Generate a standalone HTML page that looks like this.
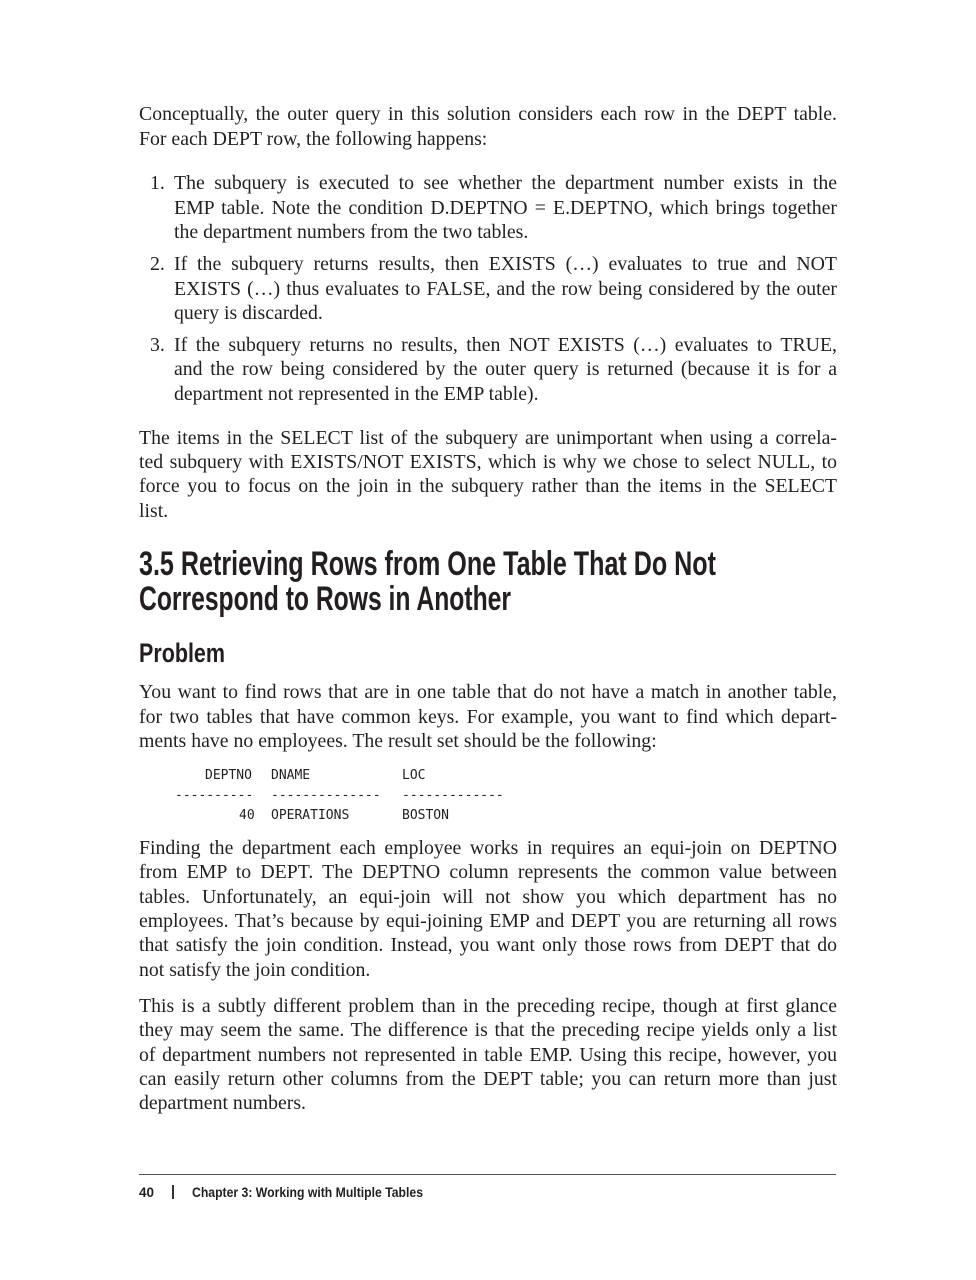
<!DOCTYPE html>
<html><head><meta charset="utf-8">
<style>
body{margin:0;background:#fff;}
#p{position:relative;width:976px;height:1280px;background:#fff;color:#231f20;font-family:"Liberation Serif",serif;font-size:19.8px;}
.l{position:absolute;left:139px;width:697px;white-space:nowrap;line-height:24px;}
.j{text-align:justify;text-align-last:justify;white-space:normal;width:698px;}
.i{left:174px;width:662px;}
.i.j{width:663px;}
.n{position:absolute;left:150px;line-height:24px;}
.h{position:absolute;left:139px;font-family:"Liberation Sans Narrow","Liberation Sans",sans-serif;font-weight:bold;white-space:nowrap;transform-origin:0 0;color:#231f20;}
.c{position:absolute;font-family:"DejaVu Sans Mono","Liberation Mono",monospace;font-size:13px;line-height:16px;white-space:pre;}
</style></head><body><div id="p">
<div class="l j" style="top:102px">Conceptually, the outer query in this solution considers each row in the DEPT table.</div>
<div class="l" style="top:127px">For each DEPT row, the following happens:</div>

<div class="n" style="top:171px">1.</div>
<div class="l i j" style="top:171px">The subquery is executed to see whether the department number exists in the</div>
<div class="l i j" style="top:196px">EMP table. Note the condition D.DEPTNO = E.DEPTNO, which brings together</div>
<div class="l i" style="top:220px">the department numbers from the two tables.</div>
<div class="n" style="top:252px">2.</div>
<div class="l i j" style="top:252px">If the subquery returns results, then EXISTS (…) evaluates to true and NOT</div>
<div class="l i j" style="top:277px">EXISTS (…) thus evaluates to FALSE, and the row being considered by the outer</div>
<div class="l i" style="top:301px">query is discarded.</div>
<div class="n" style="top:333px">3.</div>
<div class="l i j" style="top:333px">If the subquery returns no results, then NOT EXISTS (…) evaluates to TRUE,</div>
<div class="l i j" style="top:357px">and the row being considered by the outer query is returned (because it is for a</div>
<div class="l i" style="top:382px">department not represented in the EMP table).</div>

<div class="l j" style="top:426px">The items in the SELECT list of the subquery are unimportant when using a correla-</div>
<div class="l j" style="top:450px">ted subquery with EXISTS/NOT EXISTS, which is why we chose to select NULL, to</div>
<div class="l j" style="top:474px">force you to focus on the join in the subquery rather than the items in the SELECT</div>
<div class="l" style="top:499px">list.</div>

<div class="h" id="h1" style="top:544px;font-size:34px;line-height:40px">3.5 Retrieving Rows from One Table That Do Not</div>
<div class="h" id="h2" style="top:579px;font-size:34px;line-height:40px">Correspond to Rows in Another</div>
<div class="h" id="h3" style="top:637px;font-size:27px;line-height:32px">Problem</div>

<div class="l j" style="top:680px">You want to find rows that are in one table that do not have a match in another table,</div>
<div class="l j" style="top:705px">for two tables that have common keys. For example, you want to find which depart-</div>
<div class="l" style="top:729px">ments have no employees. The result set should be the following:</div>

<div class="c" style="left:205px;top:768px">DEPTNO</div><div class="c" style="left:271px;top:768px">DNAME</div><div class="c" style="left:402px;top:768px">LOC</div>
<div class="c" style="left:175px;top:788px">----------</div><div class="c" style="left:271px;top:788px">--------------</div><div class="c" style="left:402px;top:788px">-------------</div>
<div class="c" style="left:239px;top:808px">40</div><div class="c" style="left:271px;top:808px">OPERATIONS</div><div class="c" style="left:402px;top:808px">BOSTON</div>

<div class="l j" style="top:836px">Finding the department each employee works in requires an equi-join on DEPTNO</div>
<div class="l j" style="top:860px">from EMP to DEPT. The DEPTNO column represents the common value between</div>
<div class="l j" style="top:885px">tables. Unfortunately, an equi-join will not show you which department has no</div>
<div class="l j" style="top:909px">employees. That’s because by equi-joining EMP and DEPT you are returning all rows</div>
<div class="l j" style="top:933px">that satisfy the join condition. Instead, you want only those rows from DEPT that do</div>
<div class="l" style="top:958px">not satisfy the join condition.</div>

<div class="l j" style="top:994px">This is a subtly different problem than in the preceding recipe, though at first glance</div>
<div class="l j" style="top:1018px">they may seem the same. The difference is that the preceding recipe yields only a list</div>
<div class="l j" style="top:1043px">of department numbers not represented in table EMP. Using this recipe, however, you</div>
<div class="l j" style="top:1067px">can easily return other columns from the DEPT table; you can return more than just</div>
<div class="l" style="top:1091px">department numbers.</div>

<div style="position:absolute;left:139px;top:1174px;width:697px;height:1px;background:#555"></div>
<div class="h" id="f1" style="top:1183px;font-size:14px;line-height:18px">40</div>
<div style="position:absolute;left:172px;top:1185px;width:1.5px;height:14px;background:#333"></div>
<div class="h" id="f2" style="left:192px;top:1183px;font-size:14px;line-height:18px">Chapter 3: Working with Multiple Tables</div>
</div>
<script>
[["h1",577],["h2",372],["h3",86],["f1",15],["f2",231]].forEach(function(a){var e=document.getElementById(a[0]);var w=e.getBoundingClientRect().width;e.style.transform="scaleX("+(a[1]/w)+")";});
</script>
</body></html>
